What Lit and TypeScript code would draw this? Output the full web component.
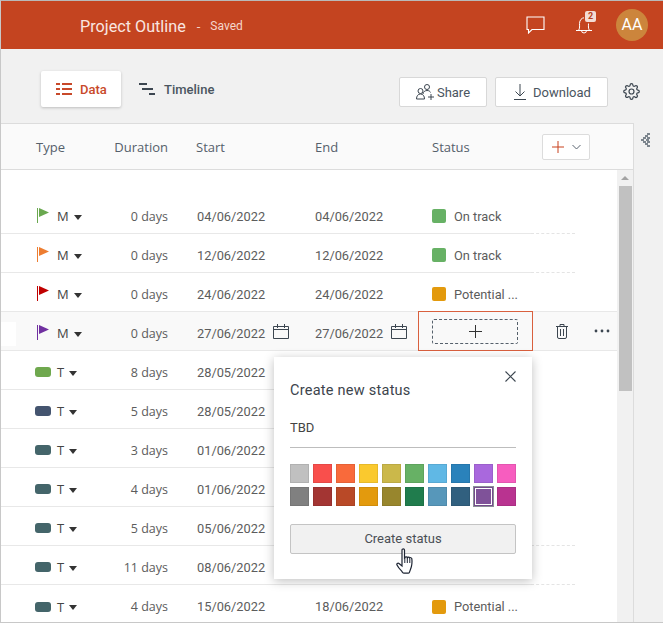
import { LitElement, css, html, nothing, svg } from "lit";
import { customElement } from "lit/decorators.js";
import { classMap } from "lit/directives/class-map.js";

interface Row {
  kind: "M" | "T";
  color: string;
  duration: string;
  start: string;
  end?: string;
  status?: string;
  statusColor?: string;
  dashed?: boolean;
  active?: boolean;
}

const ROWS: Row[] = [
  { kind: "M", color: "#6aa84f", duration: "0 days", start: "04/06/2022", end: "04/06/2022", status: "On track", statusColor: "#67b165", dashed: true },
  { kind: "M", color: "#ed7d31", duration: "0 days", start: "12/06/2022", end: "12/06/2022", status: "On track", statusColor: "#67b165", dashed: true },
  { kind: "M", color: "#c00000", duration: "0 days", start: "24/06/2022", end: "24/06/2022", status: "Potential ...", statusColor: "#e39a0d" },
  { kind: "M", color: "#7030a0", duration: "0 days", start: "27/06/2022", end: "27/06/2022", active: true },
  { kind: "T", color: "#6fa84e", duration: "8 days", start: "28/05/2022" },
  { kind: "T", color: "#44546f", duration: "5 days", start: "28/05/2022" },
  { kind: "T", color: "#44656a", duration: "3 days", start: "01/06/2022" },
  { kind: "T", color: "#44656a", duration: "4 days", start: "01/06/2022" },
  { kind: "T", color: "#44656a", duration: "5 days", start: "05/06/2022", dashed: true },
  { kind: "T", color: "#44656a", duration: "11 days", start: "08/06/2022", dashed: true },
  { kind: "T", color: "#44656a", duration: "4 days", start: "15/06/2022", end: "18/06/2022", status: "Potential ...", statusColor: "#e39a0d" },
];

const SWATCHES = [
  "#c0c0c0", "#f94f4c", "#f96a3b", "#fac92e", "#cbb84a", "#67b165", "#60b8e5", "#2a82bb", "#a968dd", "#f75dbf",
  "#808080", "#a33533", "#b94927", "#e39a0d", "#98862d", "#207c4d", "#5797ba", "#31607f", "#7f5299", "#b93390",
];

const calendar = html`<svg class="cal" width="16" height="15" viewBox="0 0 16 15" fill="none" stroke="#3c4650">
  <path d="M.5 2.500h15v12H.5zM.5 5.500h15M4.500 0v4M11.500 0v4" />
</svg>`;

const flag = (color: string) => svg`<svg width="12" height="15" viewBox="0 0 12 15">
  <rect x="0" y="0" width="1" height="15" fill=${color} />
  <path d="M2 0l10 4.500L2 9z" fill=${color} />
</svg>`;

@customElement("app-root")
export class AppRoot extends LitElement {
  static styles = css`
    :host {
      display: block;
      width: 663px;
      height: 623px;
      box-sizing: border-box;
      overflow: hidden;
      position: relative;
      border-top: 1px solid #b9b9b9;
      border-left: 1px solid #c8c8c8;
      border-bottom: 1px solid #c8c8c8;
      background: #f1f1f1;
      font-family: Roboto, "Liberation Sans", sans-serif;
      color: #444;
    }
    .topbar {
      height: 48px;
      background: #c44420;
      display: flex;
      align-items: center;
      padding-left: 79px;
      color: #fff;
    }
    .title {
      font-size: 16.2px;
      margin-top: 2px;
      color: #f9e6e0;
    }
    .dash {
      font-size: 13px;
      margin: 2px 0 0 11px;
      color: #f5d6cc;
    }
    .saved {
      font-size: 12px;
      margin: 2px 0 0 10px;
      color: #f5d6cc;
    }
    .top-icons {
      margin-left: auto;
      display: flex;
      align-items: center;
    }
    .bell {
      position: relative;
      display: flex;
      margin-left: 31px;
      margin-right: 24px;
    }
    .badge {
      position: absolute;
      left: 9px;
      top: -6px;
      width: 11px;
      height: 11px;
      background: #f3dcd5;
      color: #b5411f;
      border-radius: 2px;
      font-size: 9px;
      font-weight: 700;
      line-height: 11px;
      text-align: center;
    }
    .avatar {
      width: 32px;
      height: 32px;
      border-radius: 50%;
      background: #cc853c;
      color: #fff;
      font-size: 16px;
      line-height: 32px;
      text-align: center;
      margin-right: 15px;
    }
    .toolbar {
      height: 74px;
      box-sizing: border-box;
      display: flex;
      align-items: flex-start;
      padding: 22px 0 0 40px;
    }
    .tab {
      display: flex;
      align-items: center;
      height: 36px;
      font-size: 13px;
      font-weight: 500;
      color: #4a5560;
    }
    .tab.on {
      width: 80px;
      box-sizing: border-box;
      padding-left: 15px;
      background: #fff;
      color: #c8492a;
      border-radius: 2px;
      box-shadow: 0 1px 3px rgba(0, 0, 0, 0.22);
      gap: 8px;
    }
    .tab.off {
      margin-left: 18px;
      gap: 9px;
    }
    .btn {
      display: flex;
      align-items: center;
      justify-content: center;
      height: 30px;
      box-sizing: border-box;
      margin-top: 6px;
      background: #fff;
      border: 1px solid #d8d8d8;
      border-radius: 2px;
      font-size: 13px;
      color: #4a5560;
    }
    .share {
      width: 88px;
      margin-left: auto;
      gap: 3px;
    }
    .download {
      width: 113px;
      margin-left: 8px;
      padding-left: 2px;
      gap: 7px;
    }
    .gear {
      margin: 12px 23px 0 15px;
      display: flex;
    }
    .workspace {
      display: flex;
      height: 499px;
    }
    .panel {
      width: 633px;
      box-sizing: border-box;
      border-top: 1px solid #dcdcdc;
      border-right: 1px solid #dcdcdc;
      background: #fff;
    }
    .rail {
      flex: 1;
      padding: 9px 0 0 7px;
    }
    .head {
      height: 46px;
      box-sizing: border-box;
      background: #fafafa;
      border-bottom: 1px solid #dcdcdc;
      display: grid;
      grid-template-columns: 63px 69px 147px 117px 110px auto;
      align-items: center;
      padding-left: 35px;
      font-family: "Open Sans", sans-serif;
      font-size: 13px;
      color: #55606b;
    }
    .head .dur {
      text-align: right;
      font-size: 13px;
    }
    .head .start {
      padding-left: 28px;
    }
    .add {
      width: 48px;
      height: 26px;
      margin-top: 1px;
      box-sizing: border-box;
      background: #fff;
      border: 1px solid #dcdcdc;
      border-radius: 2px;
      display: flex;
      align-items: center;
      justify-content: center;
      gap: 8px;
    }
    .body {
      display: flex;
      height: 452px;
    }
    .rows {
      width: 616px;
      padding-top: 25px;
    }
    .row {
      display: flex;
      height: 39px;
      box-sizing: border-box;
    }
    .cells {
      width: 530px;
      flex: none;
      box-sizing: border-box;
      border-bottom: 1px solid #e8e8e8;
      padding: 4px 0 0 34px;
      display: grid;
      grid-template-columns: 64px 69px 147px 117px 1fr;
      align-items: center;
      font-size: 13px;
      color: #5c5c5c;
    }
    .row.last .cells {
      border-bottom: 0;
    }
    .tail {
      width: 44px;
      box-sizing: border-box;
      height: 39px;
    }
    .tail.dashed {
      border-bottom: 1px dashed #e4e4e4;
    }
    .row.active {
      background: #f9f9f9;
      height: 40px;
      margin-top: -1px;
      border-top: 1px solid #e8e8e8;
      border-bottom: 1px solid #e8e8e8;
      position: relative;
    }
    .row.active .cells {
      height: 38px;
      border-bottom: 0;
    }
    .row.active .tail {
      height: 38px;
      flex: 1;
      display: flex;
      align-items: center;
      padding-left: 25px;
      gap: 26px;
    }
    .grip {
      position: absolute;
      left: 0;
      top: 10px;
      width: 15px;
      height: 24px;
      background: #fff;
    }
    .type {
      display: flex;
      align-items: center;
      font-family: "Open Sans", sans-serif;
      font-size: 13px;
      color: #444;
    }
    .type svg {
      margin-top: -1px;
    }
    .type.m {
      padding-left: 2px;
    }
    .type .letter.m {
      margin-left: 8px;
    }
    .pill {
      width: 16px;
      height: 10px;
      border-radius: 3px;
    }
    .letter.t {
      margin-left: 6px;
    }
    .caret {
      width: 0;
      height: 0;
      margin-left: 5px;
      margin-top: 2px;
      border-left: 4px solid transparent;
      border-right: 4px solid transparent;
      border-top: 5px solid #333;
    }
    .dur {
      font-family: "Open Sans", sans-serif;
      font-size: 12.5px;
      text-align: right;
    }
    .date {
      display: flex;
      align-items: center;
      gap: 8px;
      font-size: 12.8px;
    }
    .date.first {
      padding-left: 29px;
    }
    .cal {
      margin-top: -4px;
    }
    .status {
      display: flex;
      align-items: center;
      gap: 8px;
      font-size: 12.8px;
    }
    .dot {
      width: 14px;
      height: 14px;
      border-radius: 2px;
    }
    .pick {
      position: relative;
      height: 34px;
    }
    .pick-frame {
      position: absolute;
      left: -14px;
      top: -5px;
      width: 115px;
      height: 40px;
      box-sizing: border-box;
      border: 1px solid #d9603e;
      display: flex;
      align-items: center;
      justify-content: center;
    }
    .pick-box {
      width: 86px;
      height: 25px;
      margin-right: 1px;
      box-sizing: border-box;
      border: 1px dashed #55606b;
      border-radius: 2px;
      display: flex;
      align-items: center;
      justify-content: center;
    }
    .scroll {
      width: 16px;
      background: #f1f1f1;
      display: flex;
      flex-direction: column;
      align-items: center;
    }
    .up {
      width: 0;
      height: 0;
      margin: 6px 0 6px;
      border-left: 4px solid transparent;
      border-right: 4px solid transparent;
      border-bottom: 4px solid #a3a3a3;
    }
    .thumb {
      width: 13px;
      height: 205px;
      background: #c1c1c1;
    }
    .pop {
      position: absolute;
      left: 273px;
      top: 356px;
      width: 258px;
      height: 222px;
      box-sizing: border-box;
      background: #fff;
      box-shadow: 0 2px 10px rgba(0, 0, 0, 0.25);
      padding: 24px 16px 0;
    }
    .pop-title {
      font-size: 14.5px;
      font-weight: 400;
      letter-spacing: 0.25px;
      line-height: 20px;
      color: #3c444c;
    }
    .close {
      position: absolute;
      right: 16px;
      top: 14px;
      display: flex;
    }
    .field {
      margin-top: 17px;
      height: 29px;
      line-height: 20px;
      border-bottom: 1px solid #bdbdbd;
      font-size: 13px;
      color: #444;
    }
    .swatches {
      margin-top: 16px;
      display: grid;
      grid-template-columns: repeat(10, 19px);
      grid-auto-rows: 19px;
      gap: 4px;
    }
    .swatch {
      box-sizing: border-box;
      border: 1px solid rgba(0, 0, 0, 0.08);
    }
    .swatch.sel {
      box-shadow: 0 0 0 1px #8a8f96, inset 0 0 0 1px #fff;
    }
    .create {
      margin-top: 18px;
      height: 30px;
      box-sizing: border-box;
      background: #f1f1f1;
      border: 1px solid #c4c4c4;
      border-radius: 2px;
      font-size: 13px;
      line-height: 28px;
      text-align: center;
      color: #4a4f55;
    }
    .cursor {
      position: absolute;
      left: 395px;
      top: 547px;
      display: flex;
    }
  `;

  private renderRow(r: Row, i: number) {
    const isLast = i === ROWS.length - 1;
    return html`<div class=${classMap({ row: true, active: !!r.active, last: isLast })}>
      ${r.active ? html`<div class="grip"></div>` : nothing}
      <div class="cells">
        <div class="type ${r.kind === "M" ? "m" : ""}">
          ${r.kind === "M" ? flag(r.color) : html`<div class="pill" style="background:${r.color}"></div>`}
          <span class="letter ${r.kind.toLowerCase()}">${r.kind}</span>
          <span class="caret"></span>
        </div>
        <div class="dur">${r.duration}</div>
        <div class="date first">${r.start}${r.active ? calendar : nothing}</div>
        <div class="date">${r.end ?? ""}${r.active ? calendar : nothing}</div>
        ${r.active
          ? html`<div class="pick">
              <div class="pick-frame">
                <div class="pick-box">
                  <svg width="13" height="13" viewBox="0 0 13 13" stroke="#333"><path d="M6.500 0v13M0 6.500h13" /></svg>
                </div>
              </div>
            </div>`
          : r.status
            ? html`<div class="status"><span class="dot" style="background:${r.statusColor}"></span>${r.status}</div>`
            : html`<div></div>`}
      </div>
      ${r.active
        ? html`<div class="tail">
            <svg width="12" height="15" viewBox="0 0 12 15" fill="none" stroke="#3c4650">
              <path d="M0 2.500h12M1.500 2.500v10.500a1.500 1.500 0 0 0 1.500 1.500h6a1.500 1.500 0 0 0 1.500-1.500V2.500M4 2.500V.5h4v2M4.500 5v7M7.500 5v7" />
            </svg>
            <svg width="16" height="4" viewBox="0 0 16 4" fill="#3c4650">
              <circle cx="2" cy="2" r="1.400" /><circle cx="8" cy="2" r="1.400" /><circle cx="14" cy="2" r="1.400" />
            </svg>
          </div>`
        : html`<div class=${classMap({ tail: true, dashed: !!r.dashed })}></div>`}
    </div>`;
  }

  render() {
    return html`
      <div class="topbar">
        <span class="title">Project Outline</span>
        <span class="dash">-</span>
        <span class="saved">Saved</span>
        <div class="top-icons">
          <svg width="19" height="18" viewBox="0 0 19 18" fill="none" stroke="#fff" stroke-width="1.100">
            <path d="M1 1h17v12.500H6L2.500 17v-3.500H1z" />
          </svg>
          <div class="bell">
            <svg width="16" height="17" viewBox="0 0 16 17" fill="none" stroke="#fff">
              <path d="M0 13.500h16M2.500 13.500c1.500-2 1-5 1-7C3.500 3 6 .8 8 .8M5.500 13.500a2.500 2.500 0 0 0 5 0M12.500 6.500c0 2-.5 5 1 7" />
            </svg>
            <span class="badge">2</span>
          </div>
          <div class="avatar">AA</div>
        </div>
      </div>
      <div class="toolbar">
        <div class="tab on">
          <svg width="16" height="12" viewBox="0 0 16 12" fill="#c8492a">
            <path d="M0 0h4v2H0zM6 0h10v2H6zM0 5h4v2H0zM6 5h10v2H6zM0 10h4v2H0zM6 10h10v2H6z" />
          </svg>
          Data
        </div>
        <div class="tab off">
          <svg width="16" height="12" viewBox="0 0 16 12" fill="#3c4650">
            <path d="M0 0h8v2H0zM3 5h11v2H3zM10 10h6v2h-6z" />
          </svg>
          Timeline
        </div>
        <div class="btn share">
          <svg width="18" height="16" viewBox="0 0 18 16" fill="none" stroke="#3c4650">
            <circle cx="11" cy="3" r="2.500" /><path d="M7 10c0-2 2-3.500 4-3.500s3 .7 3.500 2" />
            <circle cx="4.500" cy="7" r="2.500" /><path d="M.5 15c0-3 1.500-5 4-5s4 2 4 5zM12 13h6M15 10v6" />
          </svg>
          Share
        </div>
        <div class="btn download">
          <svg width="12" height="16" viewBox="0 0 12 16" fill="none" stroke="#3c4650">
            <path d="M6 0v12M1.500 7.500L6 12l4.500-4.500M0 15.500h12" />
          </svg>
          Download
        </div>
        <div class="gear">
          <svg width="17" height="17" viewBox="0 0 24 24" fill="none" stroke="#3c4650" stroke-width="1.700">
            <circle cx="12" cy="12" r="3.500" />
            <path d="M19.400 15a1.700 1.700 0 0 0 .3 1.800l.1.100a2 2 0 1 1-2.900 2.900l-.1-.1a1.700 1.700 0 0 0-2.800 1.200V21a2 2 0 1 1-4 0v-.1a1.700 1.700 0 0 0-2.800-1.200l-.1.100a2 2 0 1 1-2.900-2.900l.1-.1a1.700 1.700 0 0 0-1.200-2.800H3a2 2 0 1 1 0-4h.1a1.700 1.700 0 0 0 1.200-2.800l-.1-.1a2 2 0 1 1 2.900-2.900l.1.100a1.700 1.700 0 0 0 2.800-1.200V3a2 2 0 1 1 4 0v.1a1.700 1.700 0 0 0 2.800 1.200l.1-.1a2 2 0 1 1 2.900 2.900l-.1.100a1.700 1.700 0 0 0 1.200 2.800h.1a2 2 0 1 1 0 4h-.1a1.700 1.700 0 0 0-1.500 1z" />
          </svg>
        </div>
      </div>
      <div class="workspace">
        <div class="panel">
          <div class="head">
            <span>Type</span>
            <span class="dur">Duration</span>
            <span class="start">Start</span>
            <span>End</span>
            <span>Status</span>
            <div class="add">
              <svg width="12" height="12" viewBox="0 0 12 12" stroke="#c8401c"><path d="M6 0v12M0 6h12" /></svg>
              <svg width="9" height="6" viewBox="0 0 9 6" fill="none" stroke="#5a6570"><path d="M.5 1L4.500 5l4-4" /></svg>
            </div>
          </div>
          <div class="body">
            <div class="rows">${ROWS.map((r, i) => this.renderRow(r, i))}</div>
            <div class="scroll"><div class="up"></div><div class="thumb"></div></div>
          </div>
        </div>
        <div class="rail">
          <svg width="9" height="14" viewBox="0 0 9 14" fill="#7d868e">
            <path d="M6 0h3v2H6zM4 2h3v2H4zM2 4h3v2H2zM0 6h3v2H0zM2 8h3v2H2zM4 10h3v2H4zM6 12h3v2H6zM6 4h3v2H6zM5 6h3v2H5zM6 8h3v2H6z" />
          </svg>
        </div>
      </div>
      <div class="pop">
        <div class="pop-title">Create new status</div>
        <div class="close">
          <svg width="11" height="11" viewBox="0 0 11 11" stroke="#3c4650" stroke-width="1.100"><path d="M.5.500l10 10M10.500.500l-10 10" /></svg>
        </div>
        <div class="field">TBD</div>
        <div class="swatches">
          ${SWATCHES.map(
            (c, i) => html`<div class=${classMap({ swatch: true, sel: i === 18 })} style="background:${c}"></div>`,
          )}
        </div>
        <div class="create">Create status</div>
      </div>
      <div class="cursor">
        <svg width="18" height="26" viewBox="0 0 18 26">
          <path
            d="M6 2c0-1.500 2.500-1.500 2.500 0v8l.5-.5c.5-.8 2-.8 2.300.2.500-.7 2-.7 2.300.3.500-.5 2-.3 2.200.7.300 2 .2 5-.3 7.500-.4 2-1.500 4-2 6-.1.500-.5 1-1 1H8c-1 0-1.500-1-2.300-2C4.500 22 2 19 1 17c-.6-1.200.8-2.300 2-1.500l3 2.500z"
            fill="#fff"
            stroke="#1d2433"
            stroke-width="1.200"
          />
          <path d="M8.800 10v5M11.300 10v5M13.800 11v4" stroke="#1d2433" fill="none" />
        </svg>
      </div>
    `;
  }
}
